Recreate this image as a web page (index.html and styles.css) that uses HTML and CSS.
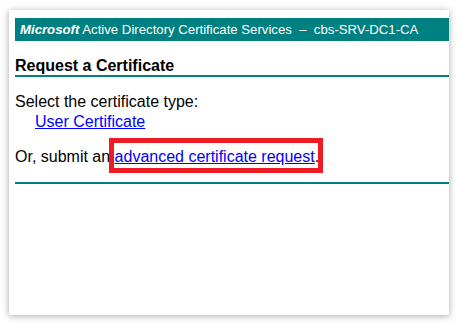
FILE: index.html
```html
<!DOCTYPE html>
<html>
<head>
    <title>Microsoft Active Directory Certificate Services</title>
    <link rel="stylesheet" href="styles.css">
</head>
<body>
    <div class="page-card">
        <div class="banner">
            <span class="banner-brand">Microsoft</span> Active Directory Certificate Services &nbsp;&ndash;&nbsp; cbs-SRV-DC1-CA
        </div>
        <h3 class="page-title">Request a Certificate</h3>
        <div class="page-body">
            <p class="type-label">Select the certificate type:</p>
            <p class="type-list"><a href="#" class="cert-link">User Certificate</a></p>
            <p class="advanced">Or, submit an <span class="callout"><a href="#" class="cert-link">advanced certificate request</a>.</span></p>
        </div>
        <div class="page-rule"></div>
    </div>
</body>
</html>
```

FILE: styles.css
```css
body {
    font-family: "Liberation Sans", Arial, sans-serif;
    margin: 0;
    padding: 10px 8px 8px 9px;
    background-color: #ffffff;
}

.page-card {
    background-color: #ffffff;
    width: 434px;
    height: 297px;
    padding: 8px 0 0 6px;
    box-shadow: 0 1px 7px rgba(0, 0, 0, 0.35);
}

.banner {
    background-color: #008080;
    color: #ffffff;
    font-size: 13.2px;
    height: 23px;
    line-height: 23px;
    padding-left: 5px;
    white-space: nowrap;
}

.banner-brand {
    font-weight: bold;
    font-style: italic;
}

.page-title {
    font-size: 16px;
    font-weight: bold;
    line-height: 19px;
    margin: 15px 0 0 0;
    color: #000000;
    border-bottom: 2px solid #008080;
}

.page-body {
    font-size: 16px;
    line-height: 20px;
    color: #000000;
    padding-top: 15px;
}

.page-body p {
    margin: 0;
}

.type-list {
    padding-left: 20px;
}

.advanced {
    margin-top: 15px !important;
}

.cert-link {
    color: #0000ff;
}

.callout {
    position: relative;
}

.callout::after {
    content: "";
    position: absolute;
    left: -6px;
    right: -4px;
    top: -10px;
    bottom: -8px;
    border: 5px solid #ed1c24;
}

.page-rule {
    border-bottom: 2px solid #008080;
    margin-top: 15px;
}
```
